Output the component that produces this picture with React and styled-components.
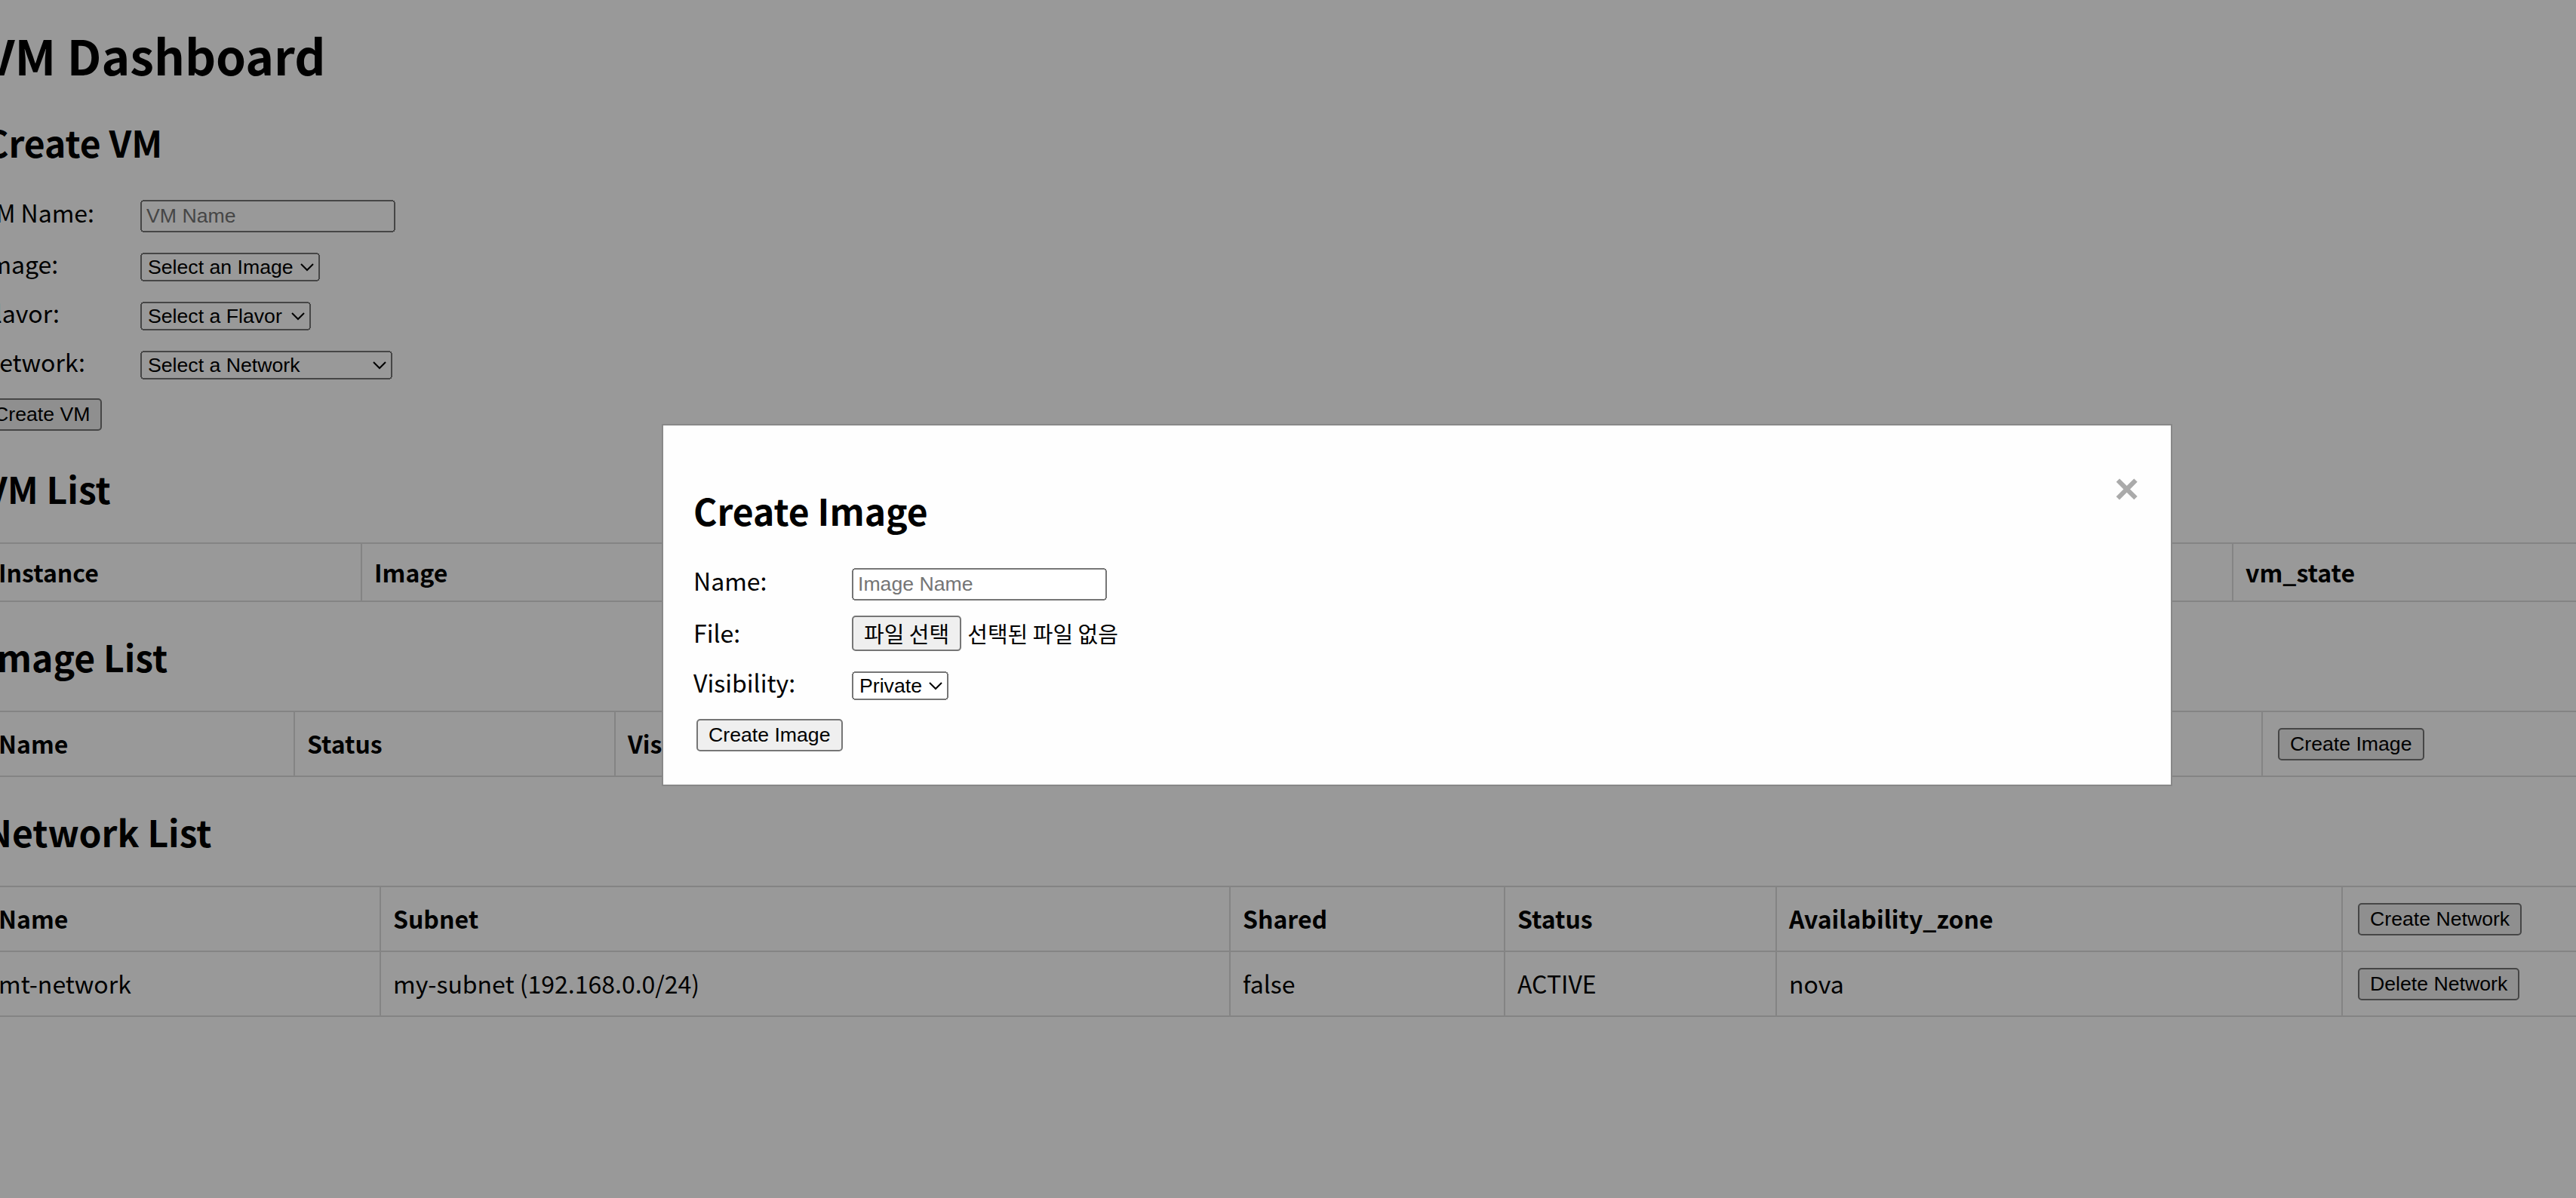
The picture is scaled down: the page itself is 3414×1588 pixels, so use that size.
import React from "react";
import styled, { createGlobalStyle } from "styled-components";

const GlobalStyle = createGlobalStyle`
  html {
    zoom: 2;
  }
  body {
    margin: 0;
    overflow: hidden;
    background: #fff;
    color: #000;
    font-family: "Noto Sans CJK KR", "Malgun Gothic", sans-serif;
    font-size: 16px;
    line-height: 1.34;
  }
`;

const Page = styled.div`
  margin-left: -10px;
  width: 1899px;
`;

const Title = styled.h1`
  font-size: 32px;
  font-weight: 700;
  margin: 15px 0 20px;
`;

const SectionTitle = styled.h2`
  font-size: 24px;
  font-weight: 700;
  margin: 19.92px 0;
`;

const VmForm = styled.div`
  margin-left: -2px;
`;

const Field = styled.div`
  margin-bottom: 10px;
`;

const FieldLabel = styled.label`
  display: inline-block;
  width: 100px;
  margin-right: 5px;
`;

const TextInput = styled.input`
  box-sizing: border-box;
  width: 169px;
  font-family: "Liberation Sans", Arial, sans-serif;
  font-size: 13.333px;
`;

const Select = styled.select`
  box-sizing: border-box;
  width: ${(p) => p.$w}px;
  font-family: "Liberation Sans", Arial, sans-serif;
  font-size: 13.333px;
`;

const Button = styled.button`
  margin: 2px;
  font-family: "Liberation Sans", Arial, sans-serif;
  font-size: 13.333px;
`;

const FormButton = styled(Button)`
  margin: 2px 0;
`;

const FileButton = styled.button`
  margin: 0 4px 0 0;
  font-family: "Noto Sans CJK KR", sans-serif;
  font-size: 14.5px;
  line-height: 17.4px;
`;

const FileText = styled.span`
  font-size: 14.5px;
`;

const Table = styled.table`
  width: 1899px;
  table-layout: fixed;
  border-collapse: collapse;
`;

const Col = styled.col`
  width: ${(p) => p.$w}px;
`;

const Th = styled.th`
  border: 1px solid #ddd;
  padding: 8px;
  text-align: left;
  font-weight: 700;
`;

const Td = styled.td`
  border: 1px solid #ddd;
  padding: 8px;
  text-align: left;
`;

const Overlay = styled.div`
  position: fixed;
  inset: 0;
  background: rgba(0, 0, 0, 0.4);
  padding-top: 281px;
`;

const Modal = styled.div`
  width: 959px;
  margin-left: 438.5px;
  padding: 20px;
  border: 1px solid #888;
  background: #fefefe;
`;

const Close = styled.span`
  float: right;
  margin-right: 1px;
  color: #aaa;
  font-family: "Liberation Sans", Arial, sans-serif;
  font-size: 28px;
  font-weight: 700;
  line-height: 44px;
  cursor: pointer;
`;

const ModalTitle = styled.h2`
  font-size: 24px;
  font-weight: 700;
  margin: 19.92px 0;
`;

const vmCols = [249, 250, 250, 250, 240, 250, 410];
const imageCols = [204.5, 212.5, 300, 250, 270, 271.5, 390.5];
const networkCols = [261.5, 563, 182, 180, 375, 337.5];

const Cols = ({ widths }) => (
  <colgroup>
    {widths.map((w, i) => (
      <Col key={i} $w={w} />
    ))}
  </colgroup>
);

const networks = [
  {
    id: "net-1",
    name: "mt-network",
    subnet: "my-subnet (192.168.0.0/24)",
    shared: "false",
    status: "ACTIVE",
    zone: "nova",
  },
];

const App = () => {
  return (
    <>
      <GlobalStyle />
      <Page>
        <Title>VM Dashboard</Title>

        <SectionTitle>Create VM</SectionTitle>
        <VmForm>
          <Field>
            <FieldLabel>VM Name:</FieldLabel>
            <TextInput type="text" placeholder="VM Name" />
          </Field>
          <Field>
            <FieldLabel>Image:</FieldLabel>
            <Select $w={119}>
              <option>Select an Image</option>
            </Select>
          </Field>
          <Field>
            <FieldLabel>Flavor:</FieldLabel>
            <Select $w={113}>
              <option>Select a Flavor</option>
            </Select>
          </Field>
          <Field>
            <FieldLabel>Network:</FieldLabel>
            <Select $w={167}>
              <option>Select a Network</option>
            </Select>
          </Field>
          <FormButton>Create VM</FormButton>
        </VmForm>

        <SectionTitle>VM List</SectionTitle>
        <Table>
          <Cols widths={vmCols} />
          <thead>
            <tr>
              <Th>Instance</Th>
              <Th>Image</Th>
              <Th>Flavor</Th>
              <Th>Network</Th>
              <Th>Status</Th>
              <Th>power_state</Th>
              <Th>vm_state</Th>
            </tr>
          </thead>
        </Table>

        <SectionTitle>Image List</SectionTitle>
        <Table>
          <Cols widths={imageCols} />
          <thead>
            <tr>
              <Th>Name</Th>
              <Th>Status</Th>
              <Th>Visibility</Th>
              <Th>Size</Th>
              <Th>Disk_format</Th>
              <Th>Created_at</Th>
              <Th>
                <Button>Create Image</Button>
              </Th>
            </tr>
          </thead>
        </Table>

        <SectionTitle>Network List</SectionTitle>
        <Table>
          <Cols widths={networkCols} />
          <thead>
            <tr>
              <Th>Name</Th>
              <Th>Subnet</Th>
              <Th>Shared</Th>
              <Th>Status</Th>
              <Th>Availability_zone</Th>
              <Th>
                <Button>Create Network</Button>
              </Th>
            </tr>
          </thead>
          <tbody>
            {networks.map((net) => (
              <tr key={net.id}>
                <Td>{net.name}</Td>
                <Td>{net.subnet}</Td>
                <Td>{net.shared}</Td>
                <Td>{net.status}</Td>
                <Td>{net.zone}</Td>
                <Td>
                  <Button>Delete Network</Button>
                </Td>
              </tr>
            ))}
          </tbody>
        </Table>
      </Page>

      <Overlay>
        <Modal>
          <Close>&times;</Close>
          <ModalTitle>Create Image</ModalTitle>
          <Field>
            <FieldLabel>Name:</FieldLabel>
            <TextInput type="text" placeholder="Image Name" />
          </Field>
          <Field>
            <FieldLabel>File:</FieldLabel>
            <FileButton>파일 선택</FileButton>
            <FileText>선택된 파일 없음</FileText>
          </Field>
          <Field>
            <FieldLabel>Visibility:</FieldLabel>
            <Select $w={64}>
              <option>Private</option>
              <option>Public</option>
            </Select>
          </Field>
          <Button>Create Image</Button>
        </Modal>
      </Overlay>
    </>
  );
};

export default App;
